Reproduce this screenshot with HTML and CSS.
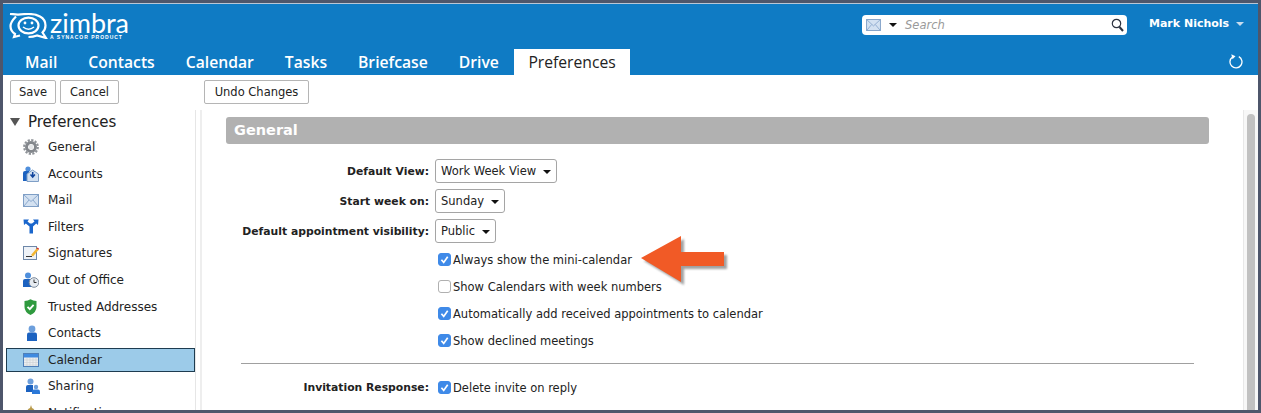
FILE: index.html
```html
<!DOCTYPE html>
<html lang="en">
<head>
    <meta charset="UTF-8">
    <meta name="viewport" content="width=device-width, initial-scale=1.0">
    <title>Zimbra - Preferences</title>
    <link rel="stylesheet" href="styles.css">
</head>
<body>
    <svg class="defs" width="0" height="0">
        <symbol id="tick" viewBox="0 0 13 13">
            <path d="M3.4 6.8l2.3 2.6 4-5.6" fill="none" stroke="#fff" stroke-width="1.7"/>
        </symbol>
        <symbol id="envelope" viewBox="0 0 16 13">
            <rect x=".5" y=".5" width="15" height="12" fill="#d3e1f1" stroke="#7f9fc6"/>
            <path d="M1 1l7 6.5L15 1M1 12l5-6M15 12l-5-6" fill="none" stroke="#8eabcf"/>
        </symbol>
        <symbol id="person" viewBox="0 0 12 16">
            <circle cx="6" cy="4" r="3.4" fill="#6d9fdc"/>
            <path d="M1 16V9.5Q1 7.500 3 7.500h6q2 0 2 2V16z" fill="#1c62c0"/>
        </symbol>
    </svg>

    <div class="app">
        <header class="topbar">
            <div class="masthead">
                <div class="logo">
                    <svg class="logo-mark" width="40" height="26" viewBox="0 0 40 26">
                        <path d="M7 3.500Q1.500 9 1.500 13q0 5 4.500 8l-1 3 6-1.500" fill="none" stroke="#fff" stroke-width="2.200"/>
                        <path d="M1 .8l8 .8Q14 1 19.500 1q7 0 11.500 2.500 5.500 3 5.500 9 0 4-3 7l3.500 5.500-9-2.500q-4 1.500-8.500 1.500" fill="none" stroke="#fff" stroke-width="2.200"/>
                        <ellipse cx="19.500" cy="12.500" rx="10" ry="7.800" fill="none" stroke="#fff" stroke-width="2.200"/>
                        <circle cx="16" cy="10" r="1.400" fill="#fff"/>
                        <circle cx="23" cy="10" r="1.400" fill="#fff"/>
                        <path d="M14 14q5.500 4.500 11 0" fill="none" stroke="#fff" stroke-width="1.500"/>
                    </svg>
                    <div class="logo-words">
                        <span class="logo-name">zimbra</span>
                        <span class="logo-sub">A SYNACOR PRODUCT</span>
                    </div>
                </div>
                <div class="search">
                    <svg class="search-mail" width="15" height="12"><use href="#envelope"/></svg>
                    <span class="caret search-caret"></span>
                    <span class="search-text">Search</span>
                    <svg class="search-glass" width="13" height="14" viewBox="0 0 13 14">
                        <circle cx="5.500" cy="5.500" r="4.200" fill="none" stroke="#2c3240" stroke-width="1.200"/>
                        <path d="M8.500 9l3.500 4" stroke="#2c3240" stroke-width="2"/>
                    </svg>
                </div>
                <div class="user">Mark Nichols <span class="caret user-caret"></span></div>
            </div>
            <nav class="tabs">
                <a class="tab">Mail</a>
                <a class="tab">Contacts</a>
                <a class="tab">Calendar</a>
                <a class="tab">Tasks</a>
                <a class="tab">Briefcase</a>
                <a class="tab">Drive</a>
                <a class="tab active">Preferences</a>
                <svg class="refresh" width="15" height="15" viewBox="0 0 15 15">
                    <path d="M4.500 3A6 6 0 1 0 10.800 2.600" fill="none" stroke="#fff" stroke-width="1.300"/>
                    <path d="M3.300 .3L7.500 2.200 4.500 5.300z" fill="#fff"/>
                </svg>
            </nav>
        </header>

        <div class="toolbar">
            <button class="btn btn-save">Save</button>
            <button class="btn btn-cancel">Cancel</button>
            <button class="btn btn-undo">Undo Changes</button>
        </div>

        <div class="workspace">
            <aside class="sidebar">
                <div class="tree-head"><span class="tree-toggle"></span>Preferences</div>
                <ul class="tree">
                    <li>
                        <svg class="ico" width="16" height="16" viewBox="0 0 16 16">
                            <circle cx="8" cy="8" r="4.500" fill="none" stroke="#83878c" stroke-width="3"/>
                            <circle cx="8" cy="8" r="6.800" fill="none" stroke="#8f9398" stroke-width="2.200" stroke-dasharray="2.200 1.360"/>
                            <circle cx="8" cy="8" r="2.400" fill="#e4e6e8"/>
                        </svg>General
                    </li>
                    <li>
                        <svg class="ico" width="16" height="16" viewBox="0 0 16 16">
                            <circle cx="5" cy="3" r="2.600" fill="#4f8fdc"/>
                            <path d="M0 15V7q0-2 2-2h4l1 10z" fill="#1c62c0"/>
                            <path d="M4 8l5.500-4L15.500 8v7.500H4z" fill="#d3e1f1" stroke="#7f9fc6"/>
                            <path d="M9.700 6v4M7.500 8.500l2.200 2.500 2.200-2.500" fill="none" stroke="#10449c" stroke-width="1.500"/>
                        </svg>Accounts
                    </li>
                    <li><svg class="ico" width="16" height="13"><use href="#envelope"/></svg>Mail</li>
                    <li>
                        <svg class="ico" width="16" height="15" viewBox="0 0 16 15">
                            <path d="M.5 .5H6L4.500 2.500 7 4.500h2l2.500-2L10 .5h5.500L15 6l-1.800-1.500L10 7.500v7H6.500v-7L2.800 4.500 1 6z" fill="#1a66cc"/>
                        </svg>Filters
                    </li>
                    <li>
                        <svg class="ico" width="16" height="16" viewBox="0 0 16 16">
                            <rect x=".5" y="1.500" width="13" height="13" fill="#eef2f7" stroke="#6d87a8"/>
                            <path d="M3 11.500h6" stroke="#333" stroke-width="1"/>
                            <path d="M8 10l5.500-6.500 2 1.500L10 11.500z" fill="#f2b632"/>
                            <path d="M13.500 3.500l2 1.500 .5-1.500-1.500-1z" fill="#d8352a"/>
                        </svg>Signatures
                    </li>
                    <li>
                        <svg class="ico" width="16" height="16" viewBox="0 0 16 16">
                            <circle cx="5" cy="3.500" r="3" fill="#4f8fdc"/>
                            <path d="M0 15V9q0-2 2-2h6l1 8z" fill="#1c62c0"/>
                            <circle cx="11" cy="10.500" r="4.800" fill="#e6ebf1" stroke="#7e8b9b"/>
                            <path d="M11 7.500v3h2.500" fill="none" stroke="#333"/>
                        </svg>Out of Office
                    </li>
                    <li>
                        <svg class="ico" width="16" height="16" viewBox="0 0 16 16">
                            <path d="M1.500 2Q5 2 7.500 .2 10 2 13.500 2v6q0 5-6 8-6-3-6-8z" fill="#2f9a3f"/>
                            <path d="M4.500 7.800l2.300 2.400 3.800-4.400" fill="none" stroke="#fff" stroke-width="1.800"/>
                        </svg>Trusted Addresses
                    </li>
                    <li><svg class="ico ico-person" width="12" height="16"><use href="#person"/></svg>Contacts</li>
                    <li class="selected">
                        <svg class="ico" width="16" height="14" viewBox="0 0 16 14">
                            <rect x=".5" y=".5" width="15" height="13" fill="#eceef0" stroke="#4f7fb8"/>
                            <rect x="1" y="1" width="14" height="3.500" fill="#3f8ae0"/>
                            <path d="M1 7h14M1 9.500h14M1 12h14M4 5v8M7 5v8M10 5v8M13 5v8" stroke="#cfd2d6" stroke-width=".7"/>
                        </svg>Calendar
                    </li>
                    <li>
                        <svg class="ico ico-share" width="14" height="16" viewBox="0 0 14 16">
                            <circle cx="4.500" cy="3.500" r="3" fill="#6d9fdc"/>
                            <path d="M0 14V9q0-2 2-2h5v7z" fill="#1c62c0"/>
                            <circle cx="10" cy="9" r="2.200" fill="#6d9fdc"/>
                            <path d="M6 16v-2.500q0-2 2-2h4q2 0 2 2V16z" fill="#2b78d8"/>
                        </svg>Sharing
                    </li>
                    <li>
                        <svg class="ico" width="16" height="16" viewBox="0 0 16 16">
                            <path d="M8 0l1 3q3 1 3 5v3l2 2H2l2-2V8q0-4 3-5z" fill="#b89a4c"/>
                        </svg>Notifications
                    </li>
                </ul>
            </aside>

            <main class="content">
                <div class="scroller">
                    <h2 class="section-title">General</h2>
                    <div class="form">
                        <div class="row row-select">
                            <label class="label">Default View:</label>
                            <span class="select">Work Week View <span class="caret"></span></span>
                        </div>
                        <div class="row row-select">
                            <label class="label">Start week on:</label>
                            <span class="select">Sunday <span class="caret"></span></span>
                        </div>
                        <div class="row row-select">
                            <label class="label">Default appointment visibility:</label>
                            <span class="select">Public <span class="caret"></span></span>
                        </div>
                        <div class="row row-check">
                            <span class="label"></span>
                            <span class="check on"><svg width="13" height="13"><use href="#tick"/></svg></span>
                            <span>Always show the mini-calendar</span>
                        </div>
                        <div class="row row-check">
                            <span class="label"></span>
                            <span class="check"></span>
                            <span>Show Calendars with week numbers</span>
                        </div>
                        <div class="row row-check">
                            <span class="label"></span>
                            <span class="check on"><svg width="13" height="13"><use href="#tick"/></svg></span>
                            <span>Automatically add received appointments to calendar</span>
                        </div>
                        <div class="row row-check">
                            <span class="label"></span>
                            <span class="check on"><svg width="13" height="13"><use href="#tick"/></svg></span>
                            <span>Show declined meetings</span>
                        </div>
                        <hr class="divider">
                        <div class="row row-check">
                            <label class="label">Invitation Response:</label>
                            <span class="check on"><svg width="13" height="13"><use href="#tick"/></svg></span>
                            <span>Delete invite on reply</span>
                        </div>
                    </div>
                    <svg class="callout" width="92" height="54" viewBox="0 0 92 54">
                        <path class="callout-shadow" d="M3 25L43 3v16h43v14H43v16z"/>
                        <path class="callout-arrow" d="M0 22L40 0v16h43v14H40v16z"/>
                    </svg>
                </div>
                <div class="scrollbar"><div class="scroll-thumb"></div></div>
            </main>
        </div>
    </div>
</body>
</html>
```

FILE: styles.css
```css
* {
    box-sizing: border-box;
}

html, body {
    margin: 0;
    height: 100%;
    overflow: hidden;
}

body {
    background: #4e566b;
    padding: 3px;
    font-family: "DejaVu Sans", sans-serif;
    font-size: 12px;
    color: #222;
}

.defs {
    position: absolute;
}

.app {
    height: 407px;
    background: #fff;
    border-top: 1px solid #b9c6d6;
    display: flex;
    flex-direction: column;
    overflow: hidden;
}

/* header */
.topbar {
    background: #0f7bc4;
    height: 71px;
    flex: none;
}

.masthead {
    height: 45px;
    display: flex;
    align-items: flex-start;
}

.logo {
    display: flex;
    margin: 9px 0 0 6px;
    width: 853px;
}

.logo-mark {
    display: block;
    margin-right: 1px;
}

.logo-words {
    display: flex;
    flex-direction: column;
    margin-top: -1px;
}

.logo-name {
    font-family: Lato, sans-serif;
    font-size: 27px;
    font-weight: 400;
    line-height: 22px;
    color: #fff;
}

.logo-sub {
    font-family: "Liberation Sans", sans-serif;
    font-size: 5px;
    font-weight: bold;
    line-height: 6px;
    letter-spacing: 1px;
    color: #fff;
    white-space: nowrap;
}

.search {
    width: 265px;
    height: 20px;
    margin-top: 11px;
    background: #fff;
    border-radius: 4px;
    display: flex;
    align-items: center;
    padding: 0 3px 0 4px;
}

.search-caret {
    margin: 0 8px 0 8px;
}

.search-text {
    font-size: 11.500px;
    font-style: italic;
    color: #9a9a9a;
    flex: 1;
}

.user {
    margin: 13px 0 0 22px;
    font-size: 11px;
    font-weight: bold;
    color: #fff;
    white-space: nowrap;
}

.caret {
    display: inline-block;
    width: 0;
    height: 0;
    border-left: 4px solid transparent;
    border-right: 4px solid transparent;
    border-top: 4px solid #111;
    vertical-align: middle;
}

.user-caret {
    border-top-color: #c7dcee;
    margin-left: 3px;
}

.tabs {
    height: 26px;
    display: flex;
    align-items: stretch;
    padding-left: 6.500px;
}

.tab {
    font-family: "Open Sans", sans-serif;
    font-size: 15.700px;
    font-weight: 600;
    line-height: 26px;
    color: #fff;
    padding: 0 15.500px;
}

.tab.active {
    background: #fff;
    color: #222;
    padding: 0 14px;
    font-weight: 400;
}

.refresh {
    margin: 5px 15px 0 auto;
}

/* toolbar */
.toolbar {
    height: 35px;
    flex: none;
    padding: 5px 7px 0;
    display: flex;
    align-items: flex-start;
}

.btn {
    height: 24px;
    padding: 0;
    margin-right: 4px;
    background: #fff;
    border: 1px solid #b5b5b5;
    border-radius: 2px;
    font-family: inherit;
    font-size: 11.500px;
    color: #222;
}

.btn-save {
    width: 46px;
}

.btn-cancel {
    width: 59px;
}

.btn-undo {
    width: 105px;
    margin-left: 81px;
}

/* left tree */
.workspace {
    flex: 1;
    min-height: 0;
    display: flex;
}

.sidebar {
    width: 193px;
    flex: none;
    padding-left: 3px;
    border-right: 1px solid #e6e6e6;
}

.tree-head {
    font-size: 15px;
    line-height: 20px;
    padding-left: 4px;
    margin-top: 2px;
    display: flex;
    align-items: center;
    white-space: nowrap;
}

.tree-toggle {
    width: 0;
    height: 0;
    border-left: 5px solid transparent;
    border-right: 5px solid transparent;
    border-top: 8px solid #555;
    margin-right: 8px;
}

.tree {
    list-style: none;
    margin: 1.700px 0 0;
    padding: 0;
}

.tree li {
    height: 26.600px;
    display: flex;
    align-items: center;
    white-space: nowrap;
}

.ico {
    flex: none;
    margin: 0 9px 0 17px;
}

.ico-person {
    margin: 0 10px 0 20px;
}

.ico-share {
    margin: 0 8px 0 20px;
}

.tree li.selected {
    height: 24px;
    margin: 1.300px 0;
    background: #9ccbe9;
    border: 1px solid #1e3c50;
}

.selected .ico {
    margin-left: 16px;
}

/* general pane */
.content {
    flex: 1;
    min-width: 0;
    margin-left: 4px;
    border-left: 2px solid #eee;
    display: flex;
}

.scroller {
    flex: 1;
    min-width: 0;
    position: relative;
    padding: 7px 0 0 24px;
    font-size: 11.500px;
}

.section-title {
    margin: 0;
    width: 983px;
    height: 27px;
    padding-left: 8px;
    background: #b1b1b1;
    border-radius: 3px;
    color: #fff;
    font-size: 14.500px;
    font-weight: bold;
    line-height: 27px;
}

.form {
    margin-top: 12px;
}

.row {
    display: flex;
    align-items: center;
    white-space: nowrap;
}

.row-select {
    height: 30px;
}

.row-check {
    height: 27px;
}

.label {
    width: 203px;
    margin-right: 6px;
    text-align: right;
    font-size: 10.800px;
    font-weight: bold;
    flex: none;
}

.select {
    height: 24px;
    padding: 0 5px;
    border: 1px solid #a5a5a5;
    border-radius: 3px;
    background: #fff;
    line-height: 22px;
}

.select .caret {
    margin-left: 3px;
}

.check {
    width: 13px;
    height: 13px;
    margin: 0 2px 0 3px;
    border: 1px solid #b0b0b0;
    border-radius: 3px;
    background: #fff;
    flex: none;
}

.check svg {
    display: block;
    margin: -1px;
}

.check.on {
    background: #3f8ae8;
    border-color: #3f8ae8;
}

.divider {
    width: 953px;
    margin: 9px 0 10px 15px;
    border: 0;
    border-top: 1px solid #a0a0a0;
}

.callout {
    position: absolute;
    left: 439px;
    top: 126px;
}

.callout-shadow {
    fill: #555;
    opacity: .55;
    filter: blur(1px);
}

.callout-arrow {
    fill: #f15a26;
}

.scrollbar {
    width: 15px;
    flex: none;
    padding: 4px 3px 0;
    background: #f7f7f7;
    border-left: 1px solid #e8e8e8;
}

.scroll-thumb {
    height: 100%;
    background: #c1c1c1;
    border-radius: 4px 4px 0 0;
}
```
